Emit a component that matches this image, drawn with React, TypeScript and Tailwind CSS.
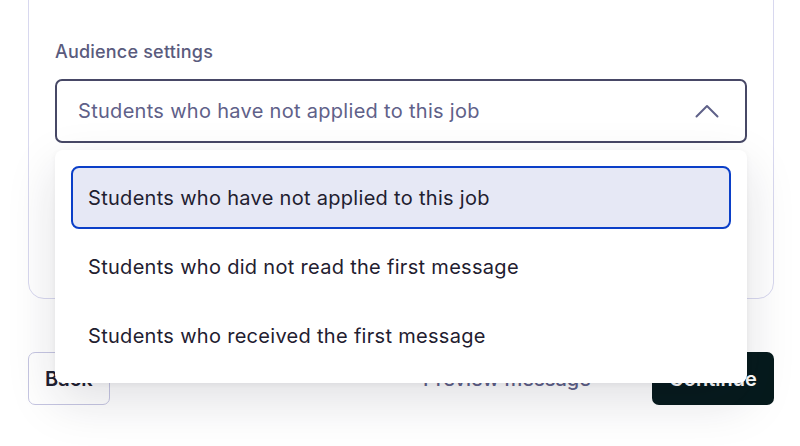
import React from 'react';

const options = [
  'Students who have not applied to this job',
  'Students who did not read the first message',
  'Students who received the first message',
];

export default function App() {
  const selected = 0;

  return (
    <div className="w-[800px] h-[446px] overflow-hidden bg-white pl-[28px] pr-[26px] font-['Inter',sans-serif]">
      {/* Settings card */}
      <div className="relative -mt-[40px] h-[339px] rounded-2xl border border-[#d8d8ef] px-[26px] pt-[79px]">
        <label className="block text-[18px] leading-6 font-medium tracking-[0.2px] text-[#5a5b7d]">Audience settings</label>

        <div className="relative mt-[15px]">
          <button className="flex h-[64px] w-full items-center justify-between rounded-[7px] border-2 border-[#474866] bg-white pl-[21px] pr-[26px] text-left">
            <span className="text-[20px] tracking-[0.3px] text-[#5f6189]">{options[selected]}</span>
            <svg width="24" height="14" viewBox="0 0 24 14" fill="none" className="text-[#5f6189]">
              <path d="M1.5 12.5 12 2l10.5 10.5" stroke="currentColor" strokeWidth="2" strokeLinecap="round" strokeLinejoin="round" />
            </svg>
          </button>

          {/* Open menu */}
          <div className="absolute left-0 right-0 top-[71px] z-20 flex flex-col gap-[6px] rounded-lg bg-white p-4 shadow-[0_18px_50px_rgba(20,20,45,0.13),0_2px_6px_rgba(20,20,45,0.05)]">
            {options.map((o, i) => (
              <div
                key={o}
                className={
                  i === selected
                    ? 'flex h-[63px] items-center rounded-lg border-2 border-[#0b3fc8] bg-[#e6e8f5] px-[15px] text-[20px] tracking-[0.3px] text-[#1f2030]'
                    : 'flex h-[63px] items-center rounded-lg border-2 border-transparent px-[15px] text-[20px] tracking-[0.3px] text-[#1f2030]'
                }
              >
                {o}
              </div>
            ))}
          </div>
        </div>
      </div>

      {/* Footer actions */}
      <div className="mt-[53px] flex items-center">
        <button className="h-[53px] rounded-[7px] border border-[#c6c6e2] px-4 text-[20px] font-semibold text-[#1f2030]">Back</button>
        <button className="ml-auto mr-[37px] h-[53px] px-6 text-[20px] font-medium text-[#5f6189]">Preview message</button>
        <button className="h-[53px] w-[122px] rounded-[7px] bg-[#061a1c] text-[20px] font-semibold text-white">Continue</button>
      </div>
    </div>
  );
}
